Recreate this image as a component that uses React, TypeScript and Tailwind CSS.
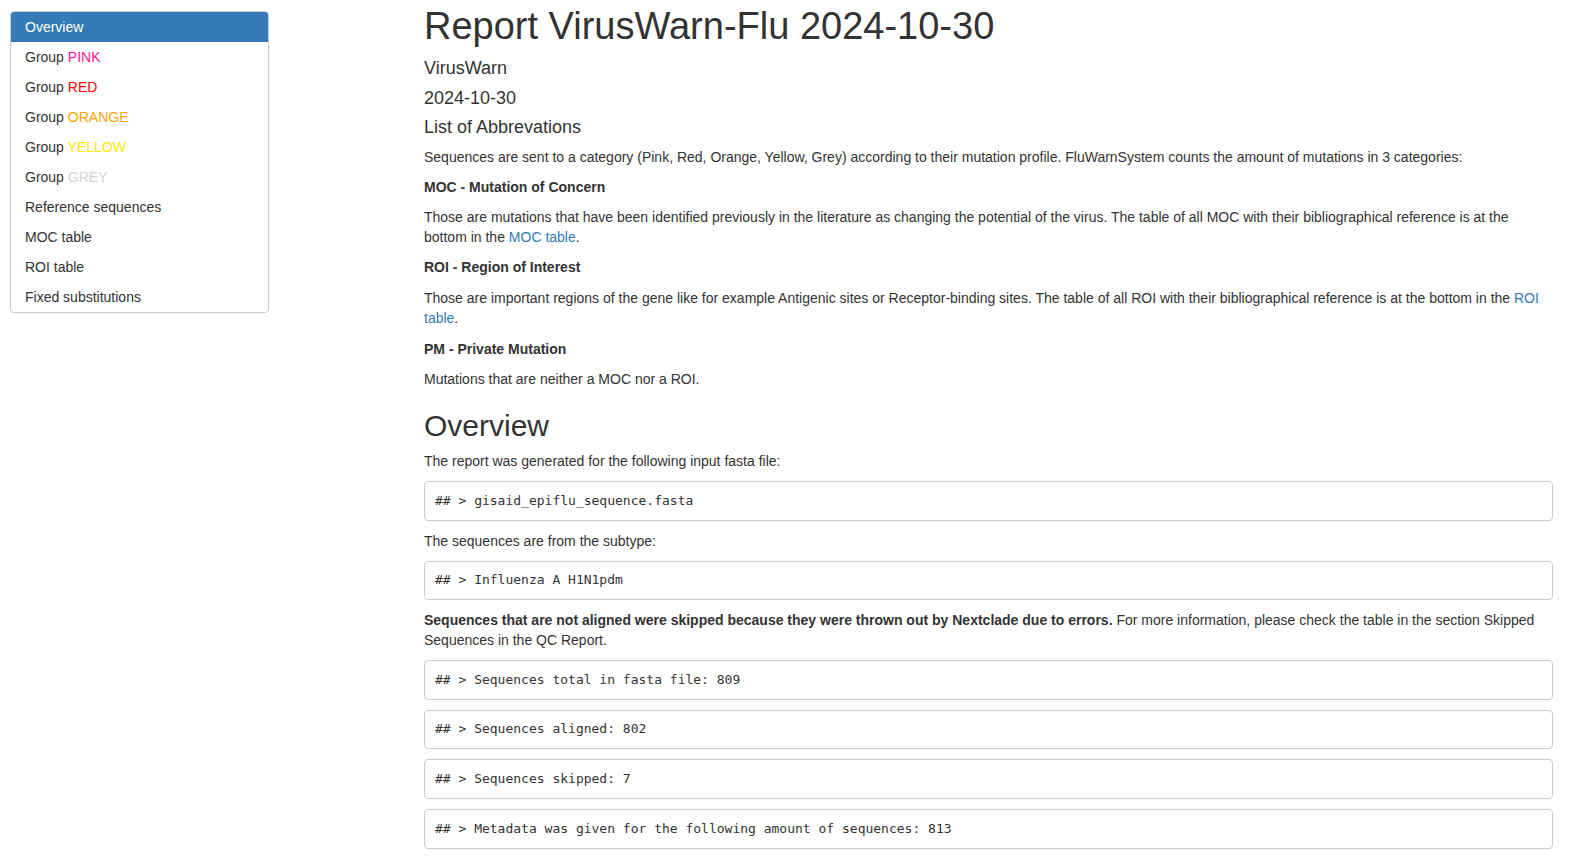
import React from "react";

const tocItems: { label: string; group?: string; color?: string; active?: boolean }[] = [
  { label: "Overview", active: true },
  { label: "Group ", group: "PINK", color: "text-[#ff1493]" },
  { label: "Group ", group: "RED", color: "text-[#ff0000]" },
  { label: "Group ", group: "ORANGE", color: "text-[#ffa500]" },
  { label: "Group ", group: "YELLOW", color: "text-[#ffe600]" },
  { label: "Group ", group: "GREY", color: "text-[#d3d3d3]" },
  { label: "Reference sequences" },
  { label: "MOC table" },
  { label: "ROI table" },
  { label: "Fixed substitutions" },
];

function Pre({ children }: { children: React.ReactNode }) {
  return (
    <pre className="mb-[10px] border border-[#cccccc] rounded-[4px] bg-white px-[10px] py-[9.5px] text-[13px] leading-[18.57px] text-[#333333] font-['DejaVu_Sans_Mono',monospace] whitespace-pre">
      {children}
    </pre>
  );
}

export default function App() {
  return (
    <div className="h-screen w-full overflow-hidden bg-white text-[#333333] font-['Liberation_Sans',Arial,sans-serif] text-[14px] leading-[20px] flex">
      <div className="w-[424px] shrink-0 pl-[10px] pt-[11px]">
        <div className="w-[259px] border border-[#cccccc] rounded-[4px] overflow-hidden">
          {tocItems.map((it, i) => (
            <div
              key={i}
              className={
                it.active
                  ? "h-[30px] pl-[14px] py-[5px] bg-[#337ab7] text-white"
                  : "h-[30px] pl-[14px] py-[5px] text-[#333333]"
              }
            >
              {it.label}
              {it.group && <span className={it.color}>{it.group}</span>}
            </div>
          ))}
        </div>
      </div>

      <div className="flex-1 min-w-0 pr-[20px] pt-[6px] flex flex-col">
        <h1 className="text-[38px] leading-[1.1] mb-[11px] font-normal">Report VirusWarn-Flu 2024-10-30</h1>
        <h4 className="text-[18px] leading-[1.1] mb-[10px]">VirusWarn</h4>
        <h4 className="text-[18px] leading-[1.1] mb-[10px]">2024-10-30</h4>
        <h4 className="text-[18px] leading-[1.1] mb-[9px]">List of Abbrevations</h4>
        <p className="mb-[10px]">
          Sequences are sent to a category (Pink, Red, Orange, Yellow, Grey) according to their mutation profile. FluWarnSystem counts the amount of mutations in 3 categories:
        </p>
        <p className="mb-[10px] font-bold">MOC - Mutation of Concern</p>
        <p className="mb-[10px]">
          Those are mutations that have been identified previously in the literature as changing the potential of the virus. The table of all MOC with their bibliographical reference is at the bottom in the{" "}
          <a className="text-[#337ab7]">MOC table</a>.
        </p>
        <p className="mb-[11px] font-bold">ROI - Region of Interest</p>
        <p className="mb-[11px]">
          Those are important regions of the gene like for example Antigenic sites or Receptor-binding sites. The table of all ROI with their bibliographical reference is at the bottom in the{" "}
          <a className="text-[#337ab7]">ROI table</a>.
        </p>
        <p className="mb-[10px] font-bold">PM - Private Mutation</p>
        <p className="mb-[10px]">Mutations that are neither a MOC nor a ROI.</p>

        <h2 className="mt-[10px] text-[30px] leading-[1.1] mb-[9px]">Overview</h2>
        <p className="mb-[10px]">The report was generated for the following input fasta file:</p>
        <Pre>## &gt; gisaid_epiflu_sequence.fasta</Pre>
        <p className="mb-[10px]">The sequences are from the subtype:</p>
        <Pre>## &gt; Influenza A H1N1pdm</Pre>
        <p className="mb-[10px]">
          <strong>Sequences that are not aligned were skipped because they were thrown out by Nextclade due to errors.</strong> For more information, please check the table in the section Skipped Sequences in the QC Report.
        </p>
        <Pre>## &gt; Sequences total in fasta file: 809</Pre>
        <Pre>## &gt; Sequences aligned: 802</Pre>
        <Pre>## &gt; Sequences skipped: 7</Pre>
        <Pre>## &gt; Metadata was given for the following amount of sequences: 813</Pre>
      </div>
    </div>
  );
}
